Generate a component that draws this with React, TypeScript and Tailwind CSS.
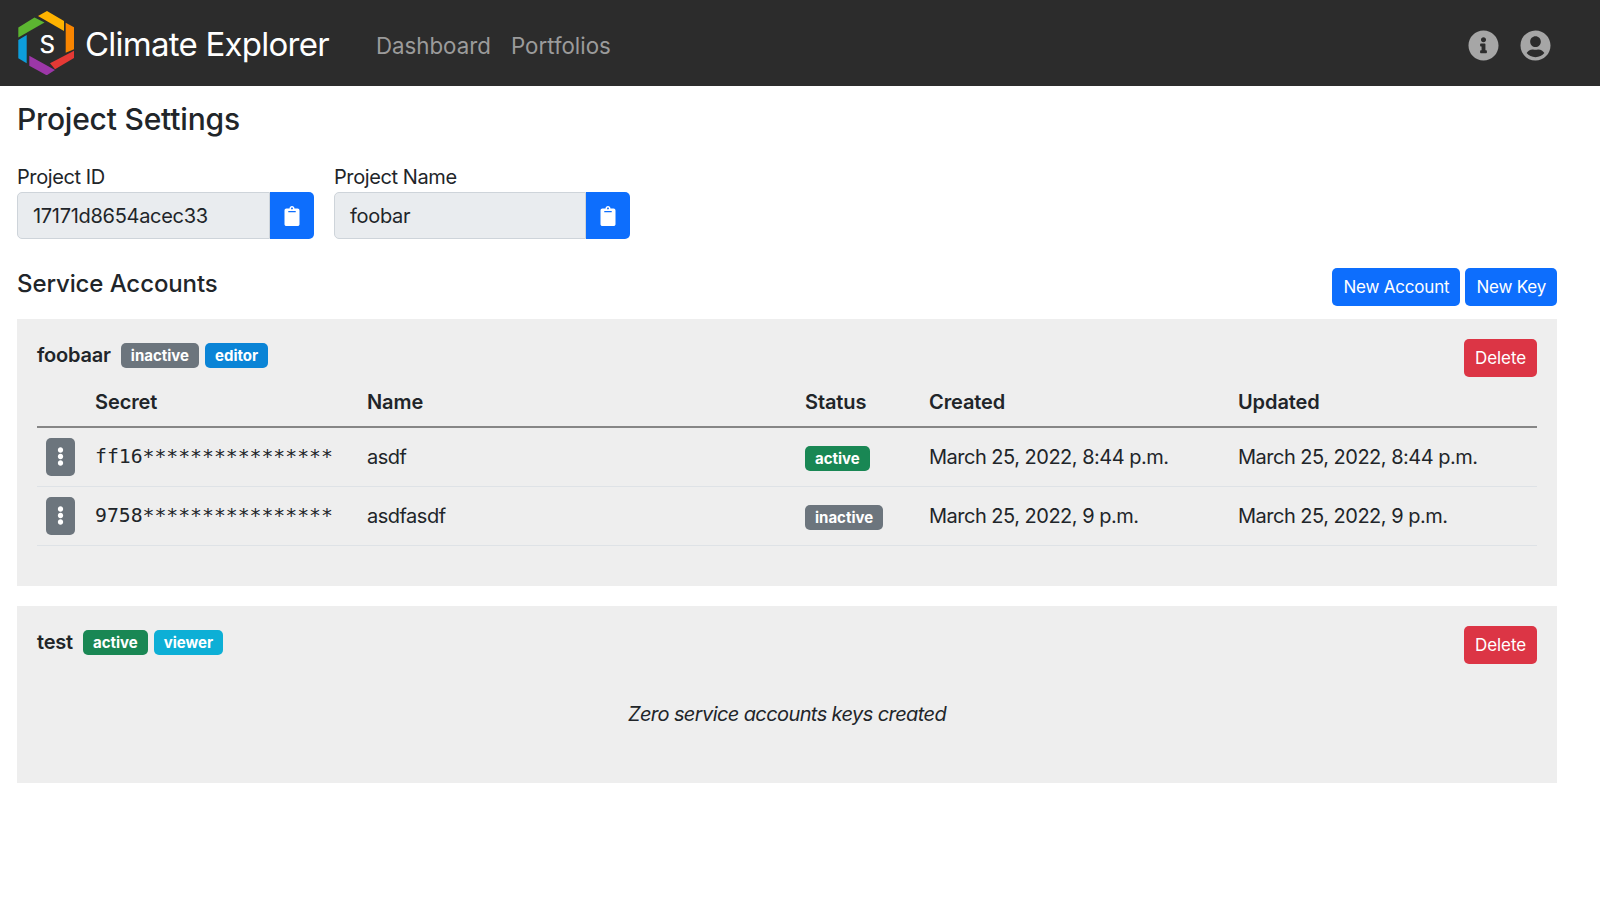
import { FaClipboard, FaEllipsisV, FaInfoCircle, FaUserCircle } from "react-icons/fa";

function Logo() {
  return (
    <svg width="56" height="64" viewBox="18 11 56 64" className="shrink-0">
      <polygon points="18.3,27.5 34.5,17.5 44.5,22.5 18.3,37.5" fill="#5cb531" />
      <polygon points="38,16 47,11 64,21 64,31" fill="#ffb300" />
      <polygon points="65.7,22.7 74,27.3 74,49.3 65.7,52.7" fill="#f98500" />
      <polygon points="50,63.3 74,50.7 74,58 55,69.3" fill="#e53935" />
      <polygon points="29.3,55.7 55,70 46.7,75.3 29.3,65.7" fill="#9c37a8" />
      <polygon points="18.3,40 26.7,35 26.7,63.3 18.3,58.3" fill="#0d9ddb" />
      <text x="47" y="53" textAnchor="middle" fill="#fff" className="text-[24px] font-medium">S</text>
    </svg>
  );
}

function Badge({ color, children }: { color: string; children: string }) {
  return (
    <span className={`inline-block rounded-[5px] px-[10px] py-[5px] text-[15px] leading-none font-bold tracking-normal text-white ${color}`}>
      {children}
    </span>
  );
}

function CopyField({ label, value, width }: { label: string; value: string; width: string }) {
  return (
    <div className={width}>
      <label className="block h-[30px] leading-[30px] tracking-[-0.4px]">{label}</label>
      <div className="flex h-[47px]">
        <div className="flex min-w-0 flex-1 items-center rounded-l-[5px] border border-[#ced4da] bg-[#e9ecef] px-[15px] tracking-[-0.3px]">{value}</div>
        <button className="flex w-[44px] items-center justify-center rounded-r-[5px] bg-[#0d6efd] text-white">
          <FaClipboard className="text-[20px]" />
        </button>
      </div>
    </div>
  );
}

function AccountHeader({ name, children }: { name: string; children: React.ReactNode }) {
  return (
    <div className="flex items-start justify-between">
      <div className="flex items-center pt-[1px]">
        <span className="mr-[10px] text-[20px] leading-[30px] font-semibold tracking-[-0.2px]">{name}</span>
        <div className="flex gap-[6px]">{children}</div>
      </div>
      <button className="h-[38px] rounded-[5px] bg-[#dc3545] px-[11px] text-[17px] tracking-[-0.1px] text-white">Delete</button>
    </div>
  );
}

const keys = [
  { secret: "ff16", name: "asdf", status: "active", date: "March 25, 2022, 8:44 p.m." },
  { secret: "9758", name: "asdfasdf", status: "inactive", date: "March 25, 2022, 9 p.m." },
];

export default function App() {
  return (
    <div className="min-h-[909px] bg-white font-['Inter',sans-serif] text-[20px] leading-[30px] tracking-[-0.5px] text-[#212529]">
      <nav className="flex h-[86px] items-center bg-[#2c2c2c] pr-[49px] pl-[18px]">
        <Logo />
        <span className="mt-[2px] ml-[11px] text-[33px] tracking-[-0.75px] text-white">Climate Explorer</span>
        <a className="mt-[6px] ml-[47px] text-[22.3px] tracking-normal text-[#9b9b9b]">Dashboard</a>
        <a className="mt-[6px] ml-[20px] text-[22.3px] tracking-normal text-[#9b9b9b]">Portfolios</a>
        <div className="mt-[5px] ml-auto flex items-center gap-[21px] text-[31px] text-[#a6a6a6]">
          <FaInfoCircle />
          <FaUserCircle />
        </div>
      </nav>

      <main className="pr-[43px] pl-[17px]">
        <h1 className="pt-[14px] text-[30px] leading-[38px] font-medium tracking-[-0.2px]">Project Settings</h1>

        <div className="mt-[24px] flex gap-[20px]">
          <CopyField label="Project ID" value="17171d8654acec33" width="w-[297px]" />
          <CopyField label="Project Name" value="foobar" width="w-[296px]" />
        </div>

        <div className="mt-[29px] flex items-start justify-between">
          <h2 className="pt-[1px] text-[24px] leading-[30px] font-medium tracking-[-0.1px]">Service Accounts</h2>
          <div className="flex gap-[5px] text-[17px] tracking-[-0.2px] text-white">
            <button className="h-[38px] rounded-[5px] bg-[#0d6efd] px-[11px]">New Account</button>
            <button className="h-[38px] rounded-[5px] bg-[#0d6efd] px-[11px]">New Key</button>
          </div>
        </div>

        <section className="mt-[13px] h-[267px] bg-[#eeeeee] px-[20px] pt-[20px]">
          <AccountHeader name="foobaar">
            <Badge color="bg-[#6c757d]">inactive</Badge>
            <Badge color="bg-[#0a84d6]">editor</Badge>
          </AccountHeader>
          <table className="w-full table-fixed border-collapse">
            <thead>
              <tr className="h-[50px] border-b-2 border-[#868686] text-left tracking-[-0.1px]">
                <th className="w-[58px] font-semibold"></th>
                <th className="w-[272px] font-semibold">Secret</th>
                <th className="w-[438px] font-semibold">Name</th>
                <th className="w-[124px] font-semibold">Status</th>
                <th className="w-[309px] font-semibold">Created</th>
                <th className="font-semibold">Updated</th>
              </tr>
            </thead>
            <tbody>
              {keys.map((k) => (
                <tr key={k.secret} className="h-[59px] border-b border-[#dee2e6]">
                  <td>
                    <button className="ml-[9px] flex h-[38px] w-[29px] items-center justify-center rounded-[5px] bg-[#6c757d] text-white">
                      <FaEllipsisV className="text-[19px]" />
                    </button>
                  </td>
                  <td className="pt-[1px] font-['DejaVu_Sans_Mono',monospace] text-[19.75px] tracking-normal">{k.secret}****************</td>
                  <td>{k.name}</td>
                  <td>
                    <Badge color={k.status === "active" ? "bg-[#198754]" : "bg-[#6c757d]"}>{k.status}</Badge>
                  </td>
                  <td>{k.date}</td>
                  <td>{k.date}</td>
                </tr>
              ))}
            </tbody>
          </table>
        </section>

        <section className="mt-[20px] h-[177px] bg-[#eeeeee] px-[20px] pt-[20px]">
          <AccountHeader name="test">
            <Badge color="bg-[#198754]">active</Badge>
            <Badge color="bg-[#0dafd6]">viewer</Badge>
          </AccountHeader>
          <p className="mt-[35px] text-center tracking-[-0.6px] italic">Zero service accounts keys created</p>
        </section>
      </main>
    </div>
  );
}
